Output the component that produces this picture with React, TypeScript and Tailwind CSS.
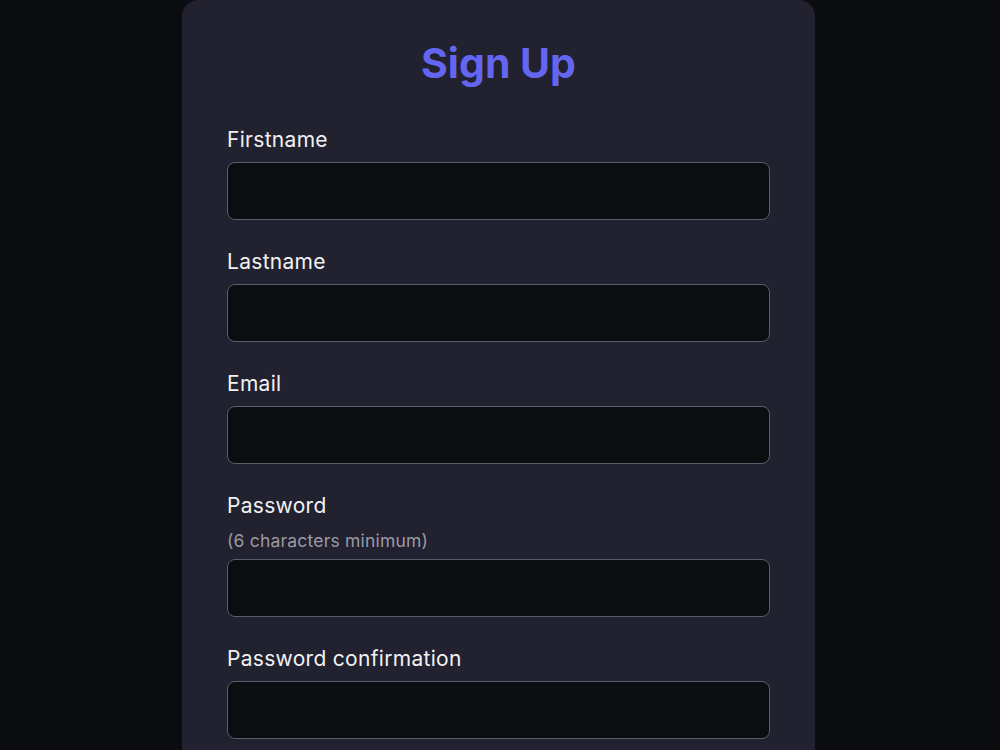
import React from "react";

const Field = ({ label, hint, type = "text" }: { label: string; hint?: string; type?: string }) => (
  <div className="flex flex-col">
    <label className="text-[21px] leading-[28px] tracking-[0.3px] text-[#f1f1f3]">{label}</label>
    {hint && (
      <span className="mt-[9px] mb-[-2px] text-[17.5px] leading-[24px] tracking-[0.2px] text-[#9a9aa4]">{hint}</span>
    )}
    <input
      type={type}
      className="mt-2 h-[58px] w-full rounded-lg border border-[#585e6a] bg-[#0c0d11] px-4 text-[20px] text-white outline-none"
    />
  </div>
);

export default function App() {
  return (
    <div className="min-h-[750px] w-full bg-[#0b0c10] font-['Inter',sans-serif]">
      <div className="flex justify-center pr-[3px]">
        <div className="w-[633px] rounded-2xl bg-[#22212f] px-[45px] pt-[38px] pb-12">
          <h1 className="text-center text-[41px] font-bold leading-[50px] text-[#6466f1]">Sign Up</h1>
          <form className="mt-[38px] flex flex-col gap-[28px]">
            <Field label="Firstname" />
            <Field label="Lastname" />
            <Field label="Email" type="email" />
            <Field label="Password" hint="(6 characters minimum)" type="password" />
            <Field label="Password confirmation" type="password" />
          </form>
        </div>
      </div>
    </div>
  );
}
